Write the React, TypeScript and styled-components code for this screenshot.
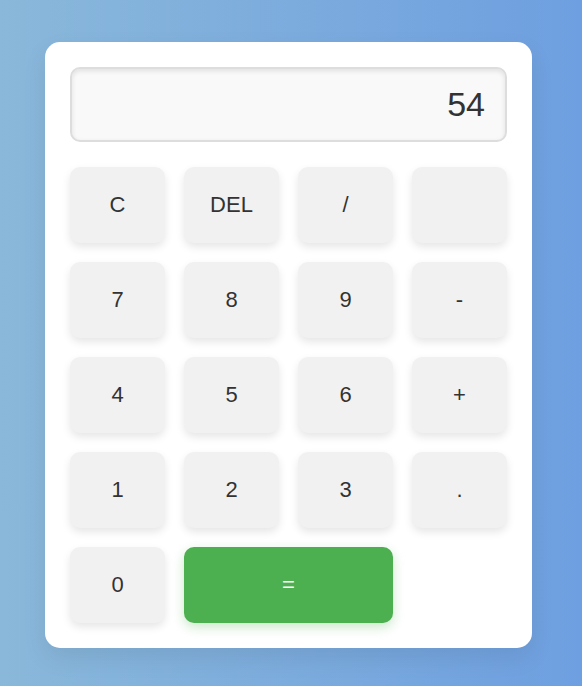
import React from "react";
import styled, { createGlobalStyle } from "styled-components";

const Global = createGlobalStyle`
  html, body { margin: 0; padding: 0; }
  body {
    font-family: "Liberation Sans", Arial, sans-serif;
    background: linear-gradient(to right, #8ab8da, #6e9fe0);
    min-height: 100vh;
  }
`;

const Page = styled.div`
  min-height: 686px;
  display: flex;
  align-items: center;
  justify-content: center;
  padding: 4px 5px 0 0;
  box-sizing: border-box;
`;

const Card = styled.div`
  width: 487px;
  box-sizing: border-box;
  background: #fff;
  border-radius: 15px;
  padding: 25px 25px 25px;
  box-shadow: 0 10px 25px rgba(0, 0, 0, 0.08);
`;

const Display = styled.div`
  height: 75px;
  box-sizing: border-box;
  border: 2px solid #ddd;
  border-radius: 10px;
  background: #f9f9f9;
  box-shadow: inset 0 2px 5px rgba(0, 0, 0, 0.1);
  display: flex;
  align-items: center;
  justify-content: flex-end;
  padding: 0 20px;
  font-size: 34px;
  color: #333;
  margin-bottom: 25px;
`;

const Grid = styled.div`
  display: grid;
  grid-template-columns: repeat(4, 95px);
  grid-auto-rows: 76px;
  column-gap: 19px;
  row-gap: 19px;
`;

const Key = styled.button<{ $span?: number; $primary?: boolean }>`
  grid-column: span ${(p) => p.$span ?? 1};
  border: none;
  border-radius: 10px;
  font-family: "Liberation Sans", Arial, sans-serif;
  font-size: 22px;
  color: ${(p) => (p.$primary ? "#fff" : "#333")};
  background: ${(p) => (p.$primary ? "#4caf50" : "#f1f1f1")};
  box-shadow: ${(p) =>
    p.$primary
      ? "0 4px 12px rgba(76, 175, 80, 0.3)"
      : "0 4px 8px rgba(0, 0, 0, 0.1)"};
  cursor: pointer;
  padding: 0;
`;

const keys: { label: string; span?: number; primary?: boolean }[] = [
  { label: "C" },
  { label: "DEL" },
  { label: "/" },
  { label: "" },
  { label: "7" },
  { label: "8" },
  { label: "9" },
  { label: "-" },
  { label: "4" },
  { label: "5" },
  { label: "6" },
  { label: "+" },
  { label: "1" },
  { label: "2" },
  { label: "3" },
  { label: "." },
  { label: "0" },
  { label: "=", span: 2, primary: true },
];

export default function App() {
  return (
    <>
      <Global />
      <Page>
        <Card>
          <Display>54</Display>
          <Grid>
            {keys.map((k, i) => (
              <Key key={i} $span={k.span} $primary={k.primary}>
                {k.label}
              </Key>
            ))}
          </Grid>
        </Card>
      </Page>
    </>
  );
}
